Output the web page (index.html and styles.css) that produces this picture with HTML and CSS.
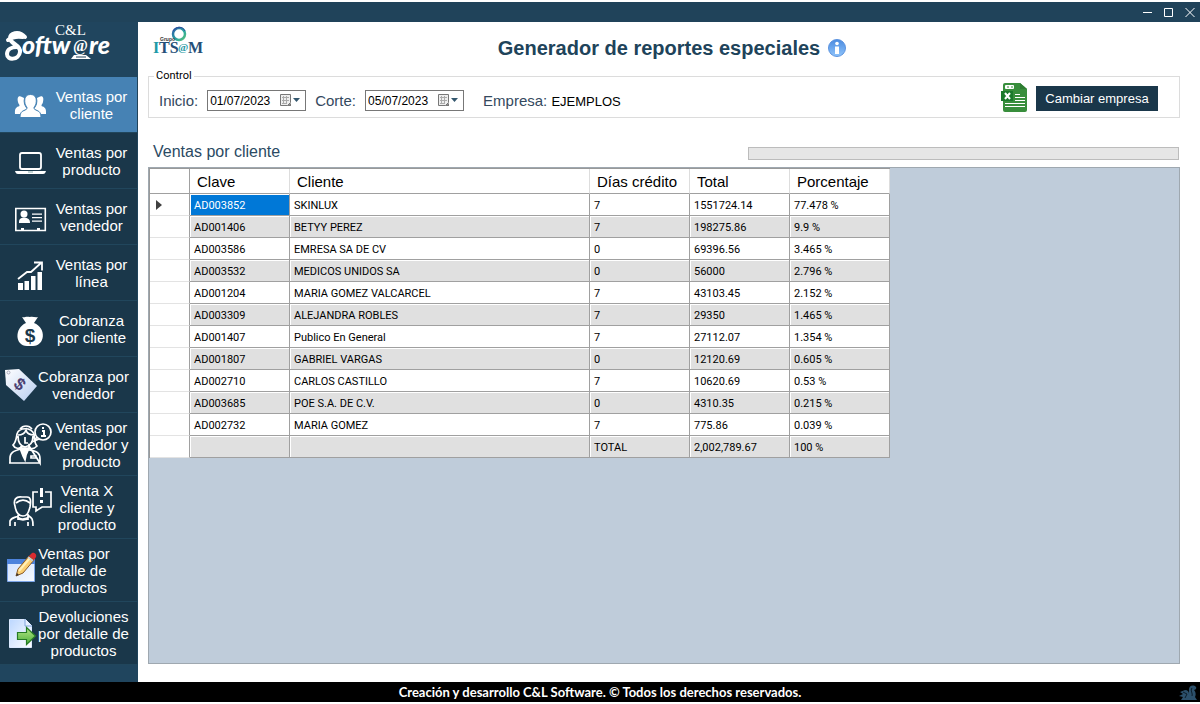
FILE: index.html
```html
<!DOCTYPE html>
<html lang="es">
<head>
<meta charset="utf-8">
<title>Generador de reportes especiales</title>
<link rel="stylesheet" href="styles.css">
</head>
<body>
<div class="titlebar">
  <button class="win-btn" aria-label="Minimizar"><svg width="10" height="10" viewBox="0 0 10 10"><path d="M0 5.500h9"/></svg></button>
  <button class="win-btn" aria-label="Maximizar"><svg width="10" height="10" viewBox="0 0 10 10"><path d="M.5 1.500h8v8h-8z"/></svg></button>
  <button class="win-btn" aria-label="Cerrar"><svg width="10" height="10" viewBox="0 0 10 10"><path d="M.5 1l9 9M9.500 1l-9 9"/></svg></button>
</div>
<div class="shell">
  <aside class="sidebar">
    <svg class="brand" width="116" height="55" viewBox="0 0 116 55" role="img" aria-label="C&amp;L Software">
      <text class="brand-top" x="55" y="13">C&amp;L</text>
      <path d="M25 15C19 8 9 11 10 17C11 22 21 23 20 30C19 38 7 39 7 32C7 27 12 25 17 25M8 18C12 15 17 14 23 15" fill="none" stroke="#fff" stroke-width="4" stroke-linecap="round"/>
      <text class="brand-main" x="22" y="32">oftw</text>
      <text class="brand-at" x="73" y="29">@</text>
      <text class="brand-main" x="89" y="32">re</text>
      <path d="M74 33h12l5 4H71z" fill="#fff"/><path d="M76 35h10" stroke="#20435a"/>
    </svg>
    <nav class="menu">
      <button class="item active">
        <svg class="ico" width="46" height="56" viewBox="0 0 46 56" fill="#fff">
          <path d="M22 20c-4-2-5 1-4 5c.3 2 1.500 2 1.500 4c-3 1-5 2-4.500 8h7c0-3 2-4 5-5c-3-3-4-7-3-11zM39 20c4-2 5 1 4 5c-.3 2-1.500 2-1.500 4c3 1 5 2 4.500 8h-7c0-3-2-4-5-5c3-3 4-7 3-11z"/>
          <path stroke="#4682b4" d="M30.500 17.500c5 0 6.500 4 5.500 9c-.5 2-1.500 3-2 4c0 2 1 2 3 3c3 1 4 3 4 7h-21c0-4 1-6 4-7c2-1 3-1 3-3c-.5-1-1.500-2-2-4c-1-5 .5-9 5.500-9z"/>
        </svg><span class="label">Ventas por<br>cliente</span></button>
      <button class="item">
        <svg class="ico" width="46" height="56" viewBox="0 0 46 56" fill="none" stroke="#fff"><rect x="20" y="20" width="21" height="16" rx="2" stroke-width="1.800"/><path d="M15 38h31c-1 3-2 3-4 3H19c-2 0-3 0-4-3z" fill="#fff" stroke="none"/><path d="M28 39h5" stroke="#8aa"/></svg>
        <span class="label">Ventas por<br>producto</span></button>
      <button class="item">
        <svg class="ico" width="46" height="56" viewBox="0 0 46 56" fill="#fff"><path d="M15.800 19.500h29.500v22H15.800z" fill="none" stroke="#fff" stroke-width="1.600"/><circle cx="24" cy="25" r="3.500"/><path d="M19 34c0-4 1-5 5-5.500c4 .5 6 1.500 6 5.500zM32 24.500h10v1.200H32zM32 28h10v1.200H32zM32 31.500h10v1.200H32zM21 39h3v3h-3zM37 39h3v3h-3z"/></svg>
        <span class="label">Ventas por<br>vendedor</span></button>
      <button class="item">
        <svg class="ico" width="46" height="56" viewBox="0 0 46 56" fill="#fff"><path d="M18 38h5v7h-5zM24.500 36h4.500v9h-4.500zM31 31h4.500v14H31zM37.500 27H42v18h-4.500z"/><path d="M18 34l9-7h4l10-9M34 17.500h8v8" fill="none" stroke="#fff" stroke-width="1.800"/></svg>
        <span class="label">Ventas por<br>línea</span></button>
      <button class="item">
        <svg class="ico" width="46" height="56" viewBox="0 0 46 56" fill="#fff"><path d="M22 16c3 1 3-1 8 0c3-1 5 1 8 0l-4 6c13 5 11 23-1 23h-6c-12 0-13-18-1-23z"/><text class="coin" x="30" y="41">$</text></svg>
        <span class="label">Cobranza<br>por cliente</span></button>
      <button class="item tight">
        <svg class="ico" width="38" height="56" viewBox="0 0 38 56"><defs><linearGradient id="tag" x2="1" y2="1"><stop stop-color="#fff"/><stop offset="1" stop-color="#b8cdf0"/></linearGradient></defs><path d="M5 13l14-1 18 17-13 15L6 28z" fill="url(#tag)"/><circle cx="8.500" cy="15.500" r="1.500" fill="none" stroke="#aab"/><text class="tag-sign" x="20" y="33" transform="rotate(40 20 27)">$</text></svg>
        <span class="label">Cobranza por<br>vendedor</span></button>
      <button class="item tall">
        <svg class="ico" width="46" height="62" viewBox="0 0 46 62" fill="none" stroke="#fff" stroke-width="1.700"><circle cx="43" cy="19" r="8"/><path d="M37 24l-3 4 5-2"/><path d="M42 18h2v5M41 23h5M43 14v2" stroke-width="2"/><path d="M17 21c2-7 14-7 17 0c1 6 0 9 3 12c-3 3-6 3-8 1M17 21c-1 6-1 8-4 11c2 4 6 4 9 2M18 22c5 0 7-2 8-5c1 4 4 5 8 5M18 23c0 6 2 10 7 11c5-1 8-5 8-11M20 16c3-4 9-4 12 0M10 50v-5c0-5 3-7 11-9v-3M29 33v4c8 1 11 3 11 9v4zM9 50h31M31 45h5v-2h-5z"/><path d="M20 35l3 8 2 4 1-5 3-7z" fill="#fff"/><path d="M25 24v6h3"/></svg>
        <span class="label">Ventas por<br>vendedor y<br>producto</span></button>
      <button class="item tall offset">
        <svg class="ico" width="46" height="62" viewBox="0 0 46 62" fill="none" stroke="#fff" stroke-width="1.700"><path d="M15 30c-2-6 1-10 7-9h5c4 0 4 4 3 10c-2 8-4 9-7 9c-4 0-7-3-8-10zM16 27c5-4 9-4 14 0M18 39v5M28 38v6M10 50v-5c1-3 4-3 8-5c0 4 9 4 11 0c3 2 4 3 4 10M15 46v4M28 46v4M18 43l5 1 5-1M38 16h-5v15h3v4l6-4h9V16h-6"/><path d="M41.500 12v9M41.500 24v3" stroke-width="3"/></svg>
        <span class="label">Venta X<br>cliente y<br>producto</span></button>
      <button class="item tall tight snug">
        <svg class="ico" width="38" height="62" viewBox="0 0 38 62"><defs><linearGradient id="win" x2="1" y2="1"><stop stop-color="#cfe1ff"/><stop offset="1" stop-color="#f7faff"/></linearGradient></defs><path d="M7.500 20.500h27v22h-27z" fill="url(#win)" stroke="#7ca5e8"/><path d="M7 20h28v5H7z" fill="#4d83dc"/><path d="M16 37l2-7 11-13 5 4-11 13z" fill="#fbcf73" stroke="#8b5a26"/><path d="M19 32l11-13" stroke="#fff0b8" stroke-width="2"/><path d="M16 37l1-3 2 2z" fill="#333"/><path d="M29 17l3-3c2-1 5 1 4 4l-2 3z" fill="#d92b31"/><path d="M28 18l5 4" stroke="#bcc6dd" stroke-width="1.500"/></svg>
        <span class="label">Ventas por<br>detalle de<br>productos</span></button>
      <button class="item tall tight">
        <svg class="ico" width="38" height="62" viewBox="0 0 38 62"><defs><linearGradient id="doc" x2="1" y2="1"><stop stop-color="#bcd7ff"/><stop offset="1" stop-color="#fff"/></linearGradient><linearGradient id="arr" x2="0" y2="1"><stop stop-color="#b7e987"/><stop offset="1" stop-color="#4cae3b"/></linearGradient></defs><path d="M9.500 17.500h16l6 6v22h-22z" fill="url(#doc)" stroke="#dce9ff"/><path d="M25 17v7h7" fill="#e6efff" stroke="#80a6dc"/><path d="M17.500 30.500h9v-5l9 8.500-9 8.500v-5h-9z" fill="url(#arr)" stroke="#257b24" stroke-width="1.200"/></svg>
        <span class="label">Devoluciones<br>por detalle de<br>productos</span></button>
    </nav>
  </aside>
  <main class="main">
    <header class="header">
      <svg class="group-logo" width="50" height="30" viewBox="0 0 50 30" role="img" aria-label="Grupo ITSAM"><defs><linearGradient id="ring" y2="1"><stop stop-color="#2a5aa8"/><stop offset=".6" stop-color="#2aa8a0"/><stop offset="1" stop-color="#5abf7b"/></linearGradient></defs>
        <circle cx="26" cy="8" r="6" fill="none" stroke="url(#ring)" stroke-width="2.500"/><path d="M20 5c3-5 10-5 12 0" stroke="#2d4b9c" fill="none"/>
        <text class="itsam cyan" x="0" y="27">I</text><text class="itsam navy" x="6" y="27">TS</text><text class="itsam-at" x="25" y="25">@</text><text class="itsam navy" x="35" y="27">M</text><text class="grupo" x="7" y="15">Grupo</text></svg>
      <div class="heading"><h1>Generador de reportes especiales</h1>
        <button class="info" aria-label="Información"><svg width="18" height="18" viewBox="0 0 18 18"><defs><linearGradient id="inf" x2="0" y2="1"><stop stop-color="#4b8be0"/><stop offset="1" stop-color="#8fc4fb"/></linearGradient></defs><circle cx="9" cy="9" r="8.500" fill="url(#inf)" stroke="#5c93df"/><circle cx="9" cy="4.500" r="1.800" fill="#fff"/><path d="M7 7.500h4V15H7z" fill="#fff"/></svg></button></div>
    </header>
    <div class="content">
      <fieldset class="control">
        <legend>Control</legend>
        <div class="control-row">
          <div class="filters">
            <label for="inicio">Inicio:</label>
            <div class="date"><input id="inicio" type="text" value="01/07/2023"><button aria-label="Abrir calendario de inicio"><svg width="21" height="13" viewBox="0 0 21 13"><path d="M.5.500h10v8l-3 3h-7z" fill="#eee" stroke="#777"/><path d="M2 3.500h7M2 6.500h7M3.500 2v8M6.500 2v8M2 9.500h5" stroke="#aaa"/><path d="M11 9v3H7z" fill="#777"/><path d="M13 4h7l-3.500 4z" fill="#34576e"/></svg></button></div>
            <label for="corte">Corte:</label>
            <div class="date"><input id="corte" type="text" value="05/07/2023"><button aria-label="Abrir calendario de corte"><svg width="21" height="13" viewBox="0 0 21 13"><path d="M.5.500h10v8l-3 3h-7z" fill="#eee" stroke="#777"/><path d="M2 3.500h7M2 6.500h7M3.500 2v8M6.500 2v8M2 9.500h5" stroke="#aaa"/><path d="M11 9v3H7z" fill="#777"/><path d="M13 4h7l-3.500 4z" fill="#34576e"/></svg></button></div>
            <p class="company">Empresa: <span class="company-name">EJEMPLOS</span></p>
          </div>
          <div class="actions">
            <button class="excel" aria-label="Exportar a Excel"><svg width="27" height="30" viewBox="0 0 27 30"><path d="M2 2q0-2 2-2h15l7 6v21q0 2-2 2H4q-2 0-2-2z" fill="#388e3c"/><path d="M19 0v6h7z" fill="#2e7d32"/><path d="M0 8h12v10H0z" fill="#1b7a2c"/><path d="M4 10l5 6M9 10l-5 6" stroke="#fff" stroke-width="2"/><rect x="4" y="2" width="9" height="4" rx="1" fill="#fff"/><path d="M6 4h2M10 4h2" stroke="#388e3c"/><path d="M14 11.500h5M14 14.500h10M14 17.500h10M4 20.500h20M4 23.500h20" stroke="#fff"/></svg></button>
            <button class="change">Cambiar empresa</button>
          </div>
        </div>
      </fieldset>
      <div class="section-head"><h2>Ventas por cliente</h2><div class="progress" role="progressbar" aria-label="Progreso" aria-valuenow="0"></div></div>
      <div class="grid">
        <table>
          <colgroup><col class="c-mark"><col class="c-std"><col class="c-name"><col class="c-std"><col class="c-std"><col class="c-std"></colgroup>
          <thead><tr><th></th><th>Clave</th><th>Cliente</th><th>Días crédito</th><th>Total</th><th>Porcentaje</th></tr></thead>
          <tbody>
            <tr><th><svg class="marker" width="6" height="10" viewBox="0 0 6 10"><path d="M0 0l6 5-6 5z" fill="#404040"/></svg></th><td class="selected">AD003852</td><td>SKINLUX</td><td>7</td><td>1551724.14</td><td>77.478 %</td></tr>
            <tr><th></th><td>AD001406</td><td>BETYY PEREZ</td><td>7</td><td>198275.86</td><td>9.9 %</td></tr>
            <tr><th></th><td>AD003586</td><td>EMRESA SA DE CV</td><td>0</td><td>69396.56</td><td>3.465 %</td></tr>
            <tr><th></th><td>AD003532</td><td>MEDICOS UNIDOS SA</td><td>0</td><td>56000</td><td>2.796 %</td></tr>
            <tr><th></th><td>AD001204</td><td>MARIA GOMEZ VALCARCEL</td><td>7</td><td>43103.45</td><td>2.152 %</td></tr>
            <tr><th></th><td>AD003309</td><td>ALEJANDRA ROBLES</td><td>7</td><td>29350</td><td>1.465 %</td></tr>
            <tr><th></th><td>AD001407</td><td>Publico En General</td><td>7</td><td>27112.07</td><td>1.354 %</td></tr>
            <tr><th></th><td>AD001807</td><td>GABRIEL VARGAS</td><td>0</td><td>12120.69</td><td>0.605 %</td></tr>
            <tr><th></th><td>AD002710</td><td>CARLOS CASTILLO</td><td>7</td><td>10620.69</td><td>0.53 %</td></tr>
            <tr><th></th><td>AD003685</td><td>POE S.A. DE C.V.</td><td>0</td><td>4310.35</td><td>0.215 %</td></tr>
            <tr><th></th><td>AD002732</td><td>MARIA GOMEZ</td><td>7</td><td>775.86</td><td>0.039 %</td></tr>
            <tr><th></th><td></td><td></td><td>TOTAL</td><td>2,002,789.67</td><td>100 %</td></tr>
          </tbody>
        </table>
      </div>
    </div>
  </main>
</div>
<footer class="footer">
  <span class="credit">Creación y desarrollo C&amp;L Software. © Todos los derechos reservados.</span>
  <svg class="mascot" width="18" height="16" viewBox="0 0 18 16" fill="#2c506b"><path d="M10 6c-1-5 4-7 7-4c1 2-1 3-2 3c2 2 2 5 1 7l2 3H2l2-3-4-1 4-2-3-2 5-2c3 0 4 2 4 4z"/><path d="M13 3c-2 3 1 5 0 8M4 7l4 2-2 4" fill="none" stroke="#0c1d2a"/></svg>
</footer>
</body>
</html>
```
FILE: styles.css
```css
* { box-sizing: border-box; }
body {
  margin: 0;
  padding: 2px 0;
  min-height: 100vh;
  display: flex;
  flex-direction: column;
  background: #fff;
  color: #000;
  font-family: "Liberation Sans", Arial, sans-serif;
}
button { font: inherit; color: inherit; border: 0; padding: 0; background: none; cursor: pointer; }
h1, h2, p { margin: 0; }
svg { display: block; flex: none; }

.titlebar {
  height: 20px;
  background: #20435a;
  display: flex;
  justify-content: flex-end;
  align-items: center;
  gap: 11px;
  padding-right: 5px;
}
.win-btn svg { fill: none; stroke: #fff; }

.shell { flex: 1; display: flex; }
.sidebar { width: 138px; flex: none; background: #20455e; }
.brand { fill: #fff; overflow: visible; }
.brand-top { font: 15px "Liberation Serif", serif; }
.brand-main { font: italic 900 25px Lato, sans-serif; }
.brand-at { font: bold 16px "Liberation Serif", serif; }
.menu { display: flex; flex-direction: column; }
.item {
  display: flex;
  align-items: center;
  height: 56px;
  background: #1a374a;
  border-bottom: 1px solid #21465c;
  border-right: 1px solid #20435a;
  color: #fff;
  font-size: 15px;
  line-height: 17px;
}
.item.tall { height: 63px; }
.item.active { background: #4682b4; }
.ico { overflow: visible; }
.label { flex: none; width: 91px; text-align: center; white-space: nowrap; }
.offset .label { width: 82px; }
.snug .label { width: 72px; }
.coin { font: bold 19px "Liberation Sans", sans-serif; fill: #1a374a; text-anchor: middle; }
.tag-sign { font: bold 17px "Liberation Sans", sans-serif; fill: #4a3f72; text-anchor: middle; }

.main { flex: 1; min-width: 0; display: flex; flex-direction: column; }
.header {
  height: 47px;
  padding: 4px 9px 0 15px;
  display: grid;
  grid-template-columns: 1fr auto 1fr;
  align-items: center;
}
.group-logo { align-self: start; }
.itsam { font: bold 16px "Liberation Serif", serif; }
.cyan { fill: #2199a8; }
.navy { fill: #254f78; }
.itsam-at { font: bold 11px "Liberation Serif", serif; fill: #2a9aa5; }
.grupo { font: bold 5px "Liberation Sans", sans-serif; fill: #333; }
.heading { display: flex; align-items: center; gap: 8px; }
.heading h1 { font-size: 20px; line-height: 24px; color: #20435a; }

.content { flex: 1; display: flex; flex-direction: column; padding: 0 20px 18px 10px; }
.control { margin: 0; padding: 0 21px 4px 10px; border: 1px solid #dcdcdc; min-width: 0; }
.control legend { padding: 0 2px; margin-left: -5px; font: 11px/14px Roboto, sans-serif; }
.control-row { display: flex; justify-content: space-between; align-items: center; height: 30px; }
.filters { display: flex; align-items: center; gap: 9px; padding-top: 4px; font-size: 15px; color: #34495e; }
.date { display: flex; align-items: center; width: 99px; height: 21px; border: 1px solid #777; background: #fff; }
.date input { flex: 1; width: 0; border: 0; padding: 1px 0 0 2px; font: 12px "Liberation Sans", sans-serif; color: #000; outline: 0; }
.date button { margin-right: 4px; }
.company { padding-left: 10px; }
.company-name { font-size: 13px; color: #000; }
.actions { display: flex; align-items: center; gap: 8px; }
.change { width: 122px; height: 25px; background: #1a374a; color: #fff; font-size: 13px; }

.section-head { display: flex; align-items: center; justify-content: space-between; padding: 18px 1px 0 5px; height: 49px; }
.section-head h2 { font-size: 16px; font-weight: normal; line-height: 20px; color: #2b4a63; }
.progress { width: 42%; height: 13px; margin-top: 4px; background: #e6e6e6; border: 1px solid #bcbcbc; }

.grid { flex: 1; border: 1px solid #9fa8b0; background: #bfccda; }
table { table-layout: fixed; width: 741px; border-collapse: separate; border-spacing: 0; border-left: 1px solid #999; border-top: 1px solid #999; }
.c-mark { width: 40px; }
.c-std { width: 100px; }
.c-name { width: 300px; }
th, td { padding: 0 4px; border-right: 1px solid #a0a0a0; border-bottom: 1px solid #a0a0a0; background: #fff; text-align: left; white-space: nowrap; font-weight: normal; }
thead th { height: 25px; padding: 0 7px; font-size: 15px; border-right-color: #ddd; }
thead th:first-child { border-right-color: #a0a0a0; }
tbody th { height: 22px; padding: 0 6px; border-bottom-color: #e3e3e3; }
td { height: 22px; padding-top: 2px; font: 11px/16px Roboto, sans-serif; }
tbody tr:nth-child(even) td { background: #e0e0e0; box-shadow: inset 1px 1px #fff; }
td.selected { background: #0078d7; color: #fff; box-shadow: inset 1px 1px #fff; }

.footer { height: 20px; background: #000; color: #fff; display: flex; align-items: center; justify-content: center; position: relative; }
.credit { font: bold 13px Lato, sans-serif; }
.mascot { position: absolute; right: 3px; bottom: 1px; }
```
